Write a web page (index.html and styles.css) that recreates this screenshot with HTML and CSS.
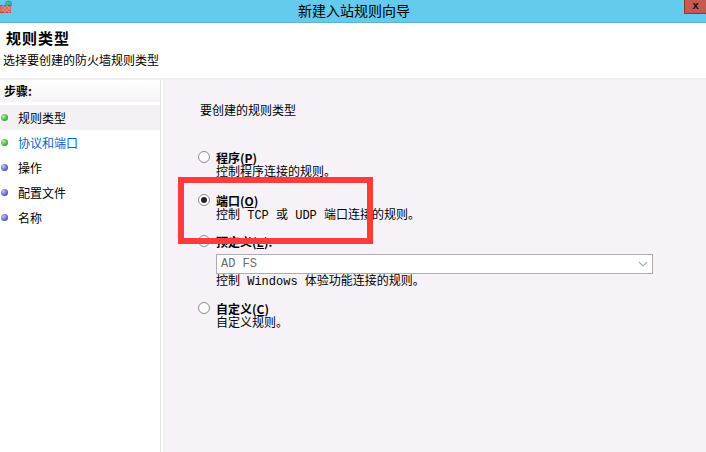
FILE: index.html
```
<!DOCTYPE html>
<html lang="zh-CN">
<head>
    <meta charset="UTF-8">
    <meta name="viewport" content="width=device-width, initial-scale=1.0">
    <title>新建入站规则向导</title>
    <link rel="stylesheet" href="styles.css">
</head>
<body>
    <div class="titlebar">
        <svg class="app-icon" width="13" height="13" viewBox="0 0 13 13">
            <circle cx="8.5" cy="4" r="3.6" fill="#3f9be0"/>
            <path d="M6 2.5 Q8 1 10 3 L9 5 Q7 4.5 6 2.5Z" fill="#5cc04a"/>
            <rect x="0" y="5" width="11" height="8" fill="#b5473a"/>
            <path d="M0 7h11M0 9h11M0 11h11M3 5v2M7 5v2M5 7v2M9 7v2M3 9v2M7 9v2M5 11v2M9 11v2" stroke="#e6b9a8" stroke-width="0.8"/>
        </svg>
        <span class="title">新建入站规则向导</span>
        <div class="close">x</div>
    </div>

    <div class="header">
        <h1>规则类型</h1>
        <p>选择要创建的防火墙规则类型</p>
    </div>

    <div class="main">
        <div class="steps">
            <div class="steps-title">步骤:</div>
            <div class="step done current"><span class="dot green"></span>规则类型</div>
            <div class="step link"><span class="dot green"></span>协议和端口</div>
            <div class="step"><span class="dot blue"></span>操作</div>
            <div class="step"><span class="dot blue"></span>配置文件</div>
            <div class="step"><span class="dot blue"></span>名称</div>
        </div>

        <div class="content">
            <div class="question">要创建的规则类型</div>

            <div class="option opt1">
                <div class="opt-label"><span class="radio"></span><b>程序(<u>P</u>)</b></div>
                <div class="desc">控制程序连接的规则。</div>
            </div>
            <div class="option opt2">
                <div class="opt-label"><span class="radio checked"></span><b>端口(<u>O</u>)</b></div>
                <div class="desc">控制 TCP 或 UDP 端口连接的规则。</div>
            </div>
            <div class="option opt3">
                <div class="opt-label"><span class="radio"></span><b>预定义(<u>E</u>):</b></div>
                <div class="select"><span>AD FS</span>
                    <svg width="10" height="6" viewBox="0 0 10 6"><path d="M1 1 L5 5 L9 1" fill="none" stroke="#b0b0b0" stroke-width="1.2"/></svg>
                </div>
                <div class="desc">控制 Windows 体验功能连接的规则。</div>
            </div>
            <div class="option opt4">
                <div class="opt-label"><span class="radio"></span><b>自定义(<u>C</u>)</b></div>
                <div class="desc">自定义规则。</div>
            </div>

            <div class="highlight"></div>
        </div>
    </div>
</body>
</html>
```

FILE: styles.css
```
body {
    margin: 0;
    width: 706px;
    height: 452px;
    overflow: hidden;
    font-family: "Liberation Mono", "Noto Sans CJK SC", monospace;
    font-size: 12px;
    color: #000;
    background: #fff;
}
.titlebar {
    height: 22px;
    background: #64cbef;
    border-bottom: 1px solid #5ab4d8;
    display: flex;
    align-items: center;
    justify-content: center;
    position: relative;
}
.app-icon {
    position: absolute;
    left: 0;
    top: 0;
}
.title {
    font-family: "Noto Sans CJK SC", sans-serif;
    font-size: 14px;
    line-height: 18px;
    margin-top: -3px;
    margin-left: 2px;
}
.close {
    position: absolute;
    right: 0;
    top: 0;
    width: 21px;
    height: 13px;
    background: #c75a50;
    border-left: 1px solid #8a3a34;
    border-bottom: 1px solid #8a3a34;
    font-family: "Liberation Sans", sans-serif;
    font-weight: bold;
    font-size: 11px;
    line-height: 10px;
    text-align: center;
    color: #111;
}
.header {
    height: 55px;
    border-bottom: 2px solid #efefef;
    padding-left: 5px;
}
.header h1 {
    margin: 0;
    padding-top: 6px;
    font-family: "Noto Sans CJK SC", sans-serif;
    font-size: 15px;
    line-height: 18px;
    letter-spacing: 1px;
    margin-left: 1px;
}
.header p {
    margin: 5px 0 0 -2px;
    font-family: "Noto Sans CJK SC", sans-serif;
    line-height: 16px;
}
.main {
    display: flex;
    height: 372px;
}
.steps {
    width: 160px;
    border-right: 1px solid #e6e3e6;
    background: #fff;
}
.steps-title {
    height: 22px;
    line-height: 22px;
    font-weight: bold;
    padding-left: 4px;
    font-family: "Noto Sans CJK SC", sans-serif;
    background: linear-gradient(#fff, #f5f3f5);
    margin-bottom: 3px;
}
.step {
    height: 25px;
    display: flex;
    align-items: center;
    font-family: "Noto Sans CJK SC", sans-serif;
}
.step.current {
    background: #f4f1f4;
}
.step.link {
    color: #0066cc;
}
.dot {
    width: 7px;
    height: 7px;
    border-radius: 50%;
    margin: 0 10px 0 1px;
}
.dot.green {
    background: radial-gradient(circle at 35% 35%, #b8f0a8, #3fb33a 60%, #2a8a2a);
}
.dot.blue {
    background: radial-gradient(circle at 35% 35%, #c8c8f8, #5a5fd0 60%, #3a3fa0);
}
.content {
    flex: 1;
    margin-left: 2px;
    background: #f7f2f7;
    border-left: 1px solid #f0edf0;
    padding: 22px 0 0 36px;
    position: relative;
}
.question {
    line-height: 16px;
    font-family: "Noto Sans CJK SC", sans-serif;
}
.option {
    margin-left: -2px;
}
.opt1 { margin-top: 31px; }
.opt2 { margin-top: 11px; }
.opt3 { margin-top: 9px; }
.opt4 { margin-top: 10px; }
.opt-label {
    display: flex;
    align-items: center;
    height: 16px;
}
.opt-label b {
    font-family: "Noto Sans CJK SC", sans-serif;
}
.radio {
    width: 10px;
    height: 10px;
    border: 1px solid #8a8a8a;
    border-radius: 50%;
    background: #fff;
    margin-right: 6px;
    position: relative;
    flex-shrink: 0;
}
.radio.checked::after {
    content: "";
    position: absolute;
    left: 2px;
    top: 2px;
    width: 6px;
    height: 6px;
    border-radius: 50%;
    background: #222;
}
.desc {
    margin-left: 18px;
    line-height: 16px;
}
.select {
    margin: 5px 0 0 18px;
    width: 427px;
    height: 18px;
    border: 1px solid #aeaeae;
    background: #fff;
    display: flex;
    align-items: center;
    justify-content: space-between;
    padding: 0 4px;
    color: #6d6d6d;
}
.highlight {
    position: absolute;
    left: 14px;
    top: 97px;
    width: 183px;
    height: 55px;
    border: 6px solid #fe3b3b;
}
```
